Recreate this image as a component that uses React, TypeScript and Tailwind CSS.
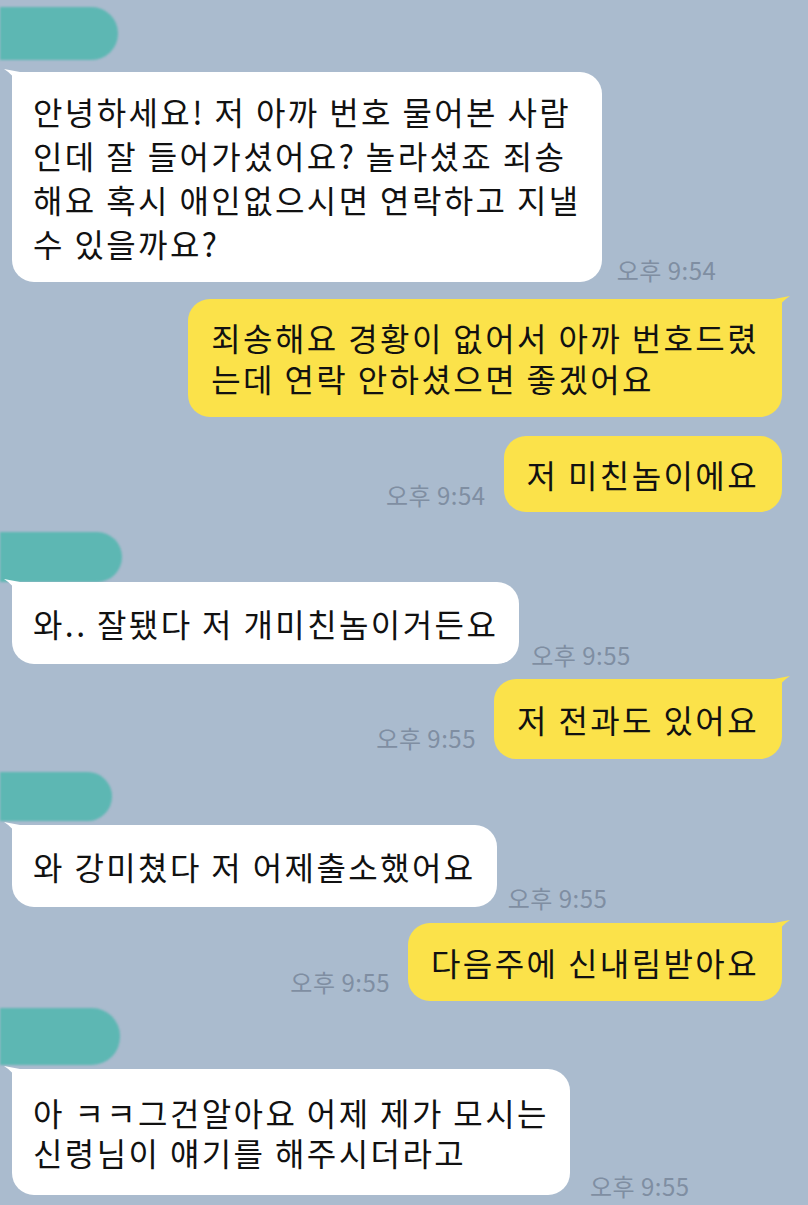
import React from "react";

const FONT = { fontFamily: "'Noto Sans CJK KR', 'Noto Sans', sans-serif" };

function Teal({ className }: { className: string }) {
  return (
    <div className={"relative " + className}>
      <div className="absolute inset-0 rounded-r-[28px] bg-[#5db7b3] blur-[1px]" />
    </div>
  );
}

function LeftTail() {
  return (
    <svg className="absolute left-[-8px] top-[-3px]" width="16" height="18" viewBox="0 0 16 18">
      <path d="M0 0 L16 3 L16 18 Q10 6 0 0 Z" fill="#ffffff" />
    </svg>
  );
}

function RightTail() {
  return (
    <svg className="absolute right-[-8px] top-[-3px]" width="16" height="18" viewBox="0 0 16 18">
      <path d="M16 0 L0 3 L0 18 Q6 6 16 0 Z" fill="#fbe24a" />
    </svg>
  );
}

function Time({ className, children }: { className: string; children: React.ReactNode }) {
  return (
    <span className={"whitespace-nowrap text-[24px] leading-[24px] tracking-[0.5px] text-[#7f8ea2] " + className}>
      {children}
    </span>
  );
}

export default function App() {
  return (
    <div
      className="w-[808px] h-[1205px] overflow-hidden bg-[#aabbce] flex flex-col text-[32px] font-normal text-[#111111] tracking-[2.4px]"
      style={FONT}
    >
      <Teal className="mt-[7px] h-[53px] w-[118px] shrink-0" />

      {/* bubble 1 */}
      <div className="mt-[12px] flex items-end pl-[12px] shrink-0">
        <div className="relative bg-white rounded-[22px] rounded-tl-[3px] px-[21px] py-[17px] leading-[44px] whitespace-nowrap">
          <LeftTail />
          안녕하세요! 저 아까 번호 물어본 사람
          <br />
          인데 잘 들어가셨어요? 놀라셨죠 죄송
          <br />
          해요 혹시 애인없으시면 연락하고 지낼
          <br />수 있을까요?
        </div>
        <Time className="ml-[15px] mb-0">오후 9:54</Time>
      </div>

      {/* bubble 2 */}
      <div className="mt-[17px] flex items-end justify-end pr-[26px] shrink-0">
        <div className="relative bg-[#fbe24a] rounded-[22px] rounded-tr-[3px] px-[23px] py-[18px] leading-[41px] whitespace-nowrap">
          <RightTail />
          죄송해요 경황이 없어서 아까 번호드렸
          <br />
          는데 연락 안하셨으면 좋겠어요
        </div>
      </div>

      {/* bubble 3 */}
      <div className="mt-[19px] flex items-end justify-end pr-[26px] shrink-0">
        <Time className="mr-[18px] mb-[5px]">오후 9:54</Time>
        <div className="relative bg-[#fbe24a] rounded-[22px] px-[23px] py-[16px] leading-[44px] whitespace-nowrap">
          저 미친놈이에요
        </div>
      </div>

      <Teal className="mt-[20px] h-[50px] w-[122px] shrink-0" />

      {/* bubble 4 */}
      <div className="mt-0 flex items-end pl-[12px] shrink-0">
        <div className="relative bg-white rounded-[22px] rounded-tl-[3px] px-[21px] py-[19px] leading-[44px] whitespace-nowrap">
          <LeftTail />
          와.. 잘됐다 저 개미친놈이거든요
        </div>
        <Time className="ml-[12px] mb-[-3px]">오후 9:55</Time>
      </div>

      {/* bubble 5 */}
      <div className="mt-[15px] flex items-end justify-end pr-[26px] shrink-0">
        <Time className="mr-[18px] mb-[9px]">오후 9:55</Time>
        <div className="relative bg-[#fbe24a] rounded-[22px] rounded-tr-[3px] px-[23px] py-[18px] leading-[44px] whitespace-nowrap">
          <RightTail />
          저 전과도 있어요
        </div>
      </div>

      <Teal className="mt-[13px] h-[49px] w-[112px] shrink-0" />

      {/* bubble 6 */}
      <div className="mt-[4px] flex items-end pl-[12px] shrink-0">
        <div className="relative bg-white rounded-[22px] rounded-tl-[3px] px-[21px] py-[19px] leading-[44px] whitespace-nowrap">
          <LeftTail />
          와 강미쳤다 저 어제출소했어요
        </div>
        <Time className="ml-[11px] mb-[-3px]">오후 9:55</Time>
      </div>

      {/* bubble 7 */}
      <div className="mt-[16px] flex items-end justify-end pr-[26px] shrink-0">
        <Time className="mr-[18px] mb-[7px]">오후 9:55</Time>
        <div className="relative bg-[#fbe24a] rounded-[22px] rounded-tr-[3px] px-[23px] py-[17px] leading-[44px] whitespace-nowrap">
          <RightTail />
          다음주에 신내림받아요
        </div>
      </div>

      <Teal className="mt-[7px] h-[57px] w-[120px] shrink-0" />

      {/* bubble 8 */}
      <div className="mt-[4px] flex items-end pl-[12px] shrink-0">
        <div className="relative bg-white rounded-[22px] rounded-tl-[3px] px-[21px] py-[23px] leading-[40px] whitespace-nowrap">
          <LeftTail />
          아 ㅋㅋ그건알아요 어제 제가 모시는
          <br />
          신령님이 얘기를 해주시더라고
        </div>
        <Time className="ml-[20px] mb-[-3px]">오후 9:55</Time>
      </div>
    </div>
  );
}
